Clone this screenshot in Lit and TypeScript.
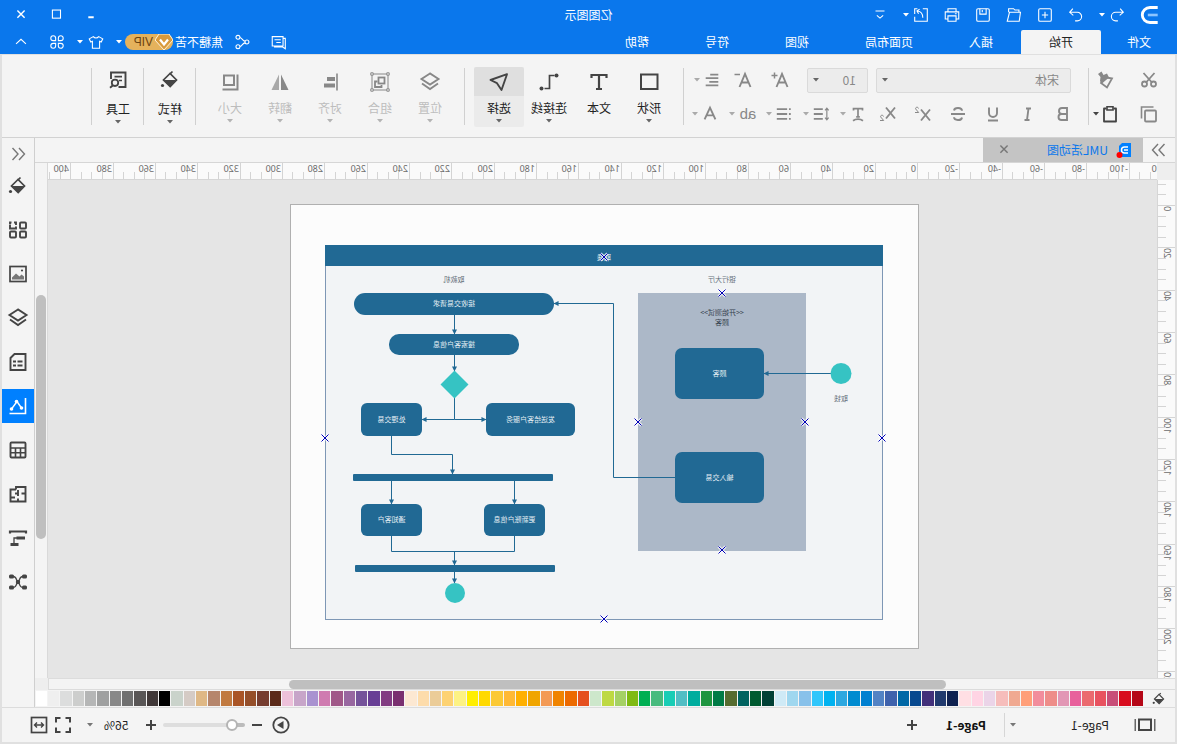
import { LitElement, html, svg, css, nothing } from "lit";
import { customElement, property, state } from "lit/decorators.js";
import { classMap } from "lit/directives/class-map.js";
import { styleMap } from "lit/directives/style-map.js";

/* Every glyph is drawn on a 20 x 20 grid. */
const ICONS: Record<string, unknown> = {
  logo: svg`<path d="M3 3.200h7c4 0 7 3 7 6.800s-3 6.800-7 6.800H3" fill="none" stroke="#fff" stroke-width="2.600"/><path d="M3 10h9" stroke="#8cc4ff" stroke-width="2.400"/>`,
  undo: svg`<path d="M6.5 3 3 7l4 3.4M3.2 7h8.3a4.6 4.6 0 0 1 0 9.5H9"/>`,
  redo: svg`<path d="M13.5 3 17 7l-4 3.4M16.8 7H8.5a4.6 4.6 0 0 0 0 9.5H11"/>`,
  create: svg`<rect x="3" y="3" width="14" height="14" rx="1.5"/><path d="M10 6.5v7M6.500 10h7"/>`,
  open: svg`<path d="M4.500 7V4.500h4.500l1.500-1.500h5.500v4M2.800 7h12.200l2.500 10H4.200z"/>`,
  save: svg`<rect x="3" y="3" width="14" height="14" rx="1.500"/><path d="M6.500 3v6h7V3M10.800 4.500v2.500"/>`,
  print: svg`<path d="M5.500 6.500V3h9v3.500M5 14.500H2.500v-8h15v8H15M5.500 11h9v6h-9zM4.800 8.600h2"/>`,
  exportFile: svg`<path d="M8 3H3v14h14v-5M17 9V3h-3M8 13c0-5 2-7 6-7.500M11.500 3.500l3 2-1.800 3.200"/>`,
  customize: svg`<path d="M5 5.500h10M6.500 10.500l3.500 3 3.500-3"/>`,
  minimize: svg`<path d="M7 12.500h6" stroke-width="2.200"/>`,
  maximize: svg`<rect x="5" y="4.500" width="9" height="9"/>`,
  close: svg`<path d="m6 5 8 8M14 5l-8 8" stroke-width="1.600"/>`,
  message: svg`<path d="M5.500 4h12v10.500h-12zM5.500 6H3v11.500L6 15.500h9.500M8 7.500h7M8 10.500h5"/>`,
  share: svg`<circle cx="4.500" cy="10" r="2.200"/><circle cx="14.500" cy="4.800" r="2.200"/><circle cx="14.500" cy="15.200" r="2.200"/><path d="M6.500 9c3 0 3-3.500 5.800-4M6.500 11c3 0 3 3.500 5.800 4"/>`,
  shirt: svg`<path d="M7 4c1.500 2 4.500 2 6 0l4.500 2.500-1.700 3.500-1.800-.8V17H6V9.200L4.200 10 2.500 6.500z"/>`,
  apps: svg`<path d="M8.500 8.500H5.800a2.700 2.700 0 1 1 2.700-2.700zM11.500 8.500V5.800a2.700 2.700 0 1 1 2.700 2.700zM8.500 11.500v2.700a2.700 2.700 0 1 1-2.700-2.700zM11.500 11.500h2.700a2.700 2.700 0 1 1-2.700 2.700z"/>`,
  collapse: svg`<path d="m4.500 12 5.500-5 5.500 5"/>`,
  cut: svg`<circle cx="5.500" cy="14" r="2.500"/><circle cx="14.500" cy="14" r="2.500"/><path d="M4.500 3 13 12.500M15.500 3 7 12.500" stroke-width="1.800"/>`,
  copy: svg`<rect x="3" y="6.500" width="11" height="11" rx="1"/><path d="M5.500 3h12v11.500" stroke-width="1.600"/>`,
  painter: svg`<path d="m4 8.500 8-1.500 3 6-6 4.500z"/><path d="m7 7.500 2-4 3.500 1.500 2-3.500 3.500 2.500-2.500 3 .5 4-2 2.500z" class="solid"/>`,
  paste: svg`<path d="M6.500 4.500H4v13h12v-13h-2.500" stroke-linejoin="round"/><path d="M7 2.800h6V6H7z" stroke-width="1.600"/>`,
  grow: svg`<path d="m2.500 17 5.500-13 5.500 13M4.500 12.500h7"/><path d="M12.500 5.500h6M15.500 2.500v6" stroke-width="1.500"/>`,
  shrink: svg`<path d="m2.500 17 5.500-13 5.500 13M4.500 12.500h7"/><path d="M13 4.500h5.500" stroke-width="1.500"/>`,
  align: svg`<path d="M3 4h9M3 8h14M3 12h10M3 16h14" stroke-width="2"/>`,
  bold: svg`<path d="M6 4h5a3 3 0 0 1 0 6H6zM6 10h5.500a3 3 0 0 1 0 6H6z"/>`,
  italic: svg`<path d="M7 4.500h5M8.500 16h5M9.500 4.500 11 16"/>`,
  underline: svg`<path d="M6 3.500V9a4 4 0 0 0 8 0V3.500M5 16.500h10"/>`,
  strike: svg`<path d="M14 6.500c-.5-3.300-7.800-3.300-8 .3M6 13.500c.5 3.600 7.800 3.300 8-.2M3 10h14"/>`,
  superscript: svg`<path d="m3 5.500 9 11M12 5.500l-9 11"/><path d="M14.500 4.500c.3-2 3.500-1.500 2.800.5l-3 3.500h3.700" stroke-width="1"/>`,
  subscript: svg`<path d="m3 3.500 9 11M12 3.500l-9 11"/><path d="M14.500 12.500c.3-2 3.500-1.500 2.800.5l-3 3.500h3.700" stroke-width="1"/>`,
  textPath: svg`<path d="M5 6V4h10v2M10 4v9M8 13.200h4M4.500 17.500c3-2.500 8-2.500 11 0"/>`,
  lineSpacing: svg`<path d="M8 4.500h10M8 10h10M8 15.500h10" stroke-width="2"/><path d="M3.500 4v12M1.500 6l2-2.500 2 2.500M1.500 14l2 2.500 2-2.500" stroke-width="1.300"/>`,
  bullets: svg`<path d="M2.500 4.500h2M6.500 4.500H18M2.500 10h2M6.500 10H18M2.500 15.500h2M6.500 15.500H18" stroke-width="2"/>`,
  fontColor: svg`<path d="m4 16 6-13 6 13M6 11.500h8" stroke-width="2.100"/>`,
  square: svg`<rect x="1.500" y="2.500" width="16.500" height="14.500" stroke-width="2"/>`,
  text: svg`<path d="M2.500 6V3h15v3M10 3v14M7 17h6" stroke-width="2.200"/>`,
  connector: svg`<path d="M14.500 16.500H9.500V3.500H4.500" stroke-width="1.700"/><circle cx="2.500" cy="3.500" r="2" class="solid"/><circle cx="17.500" cy="16.500" r="2" class="solid"/>`,
  select: svg`<path d="M2 2.200 18.500 8l-6.500 3.200L7.500 18z" stroke-width="1.900" stroke-linejoin="round"/>`,
  layers: svg`<path d="M10 1.500 18.500 7 10 12.500 1.500 7zM2 11.500l8 5.500 8-5.500" stroke-width="1.900"/>`,
  group: svg`<rect x="2" y="2" width="16" height="16" stroke-width="1"/><rect x="5.500" y="5.500" width="6" height="6" stroke-width="1.800"/><path d="M12.500 9.500h2.500v5.500H8.500v-2" stroke-width="1.800"/><path d="M.8.800h2.400v2.400H.8zM16.800.800h2.400v2.400h-2.400zM.8 16.800h2.400v2.400H.8zM16.800 16.800h2.400v2.400h-2.400z" fill="#f4f4f4" stroke-width="1"/>`,
  alignRight: svg`<path d="M3 1.500v17" stroke-width="1.600"/><path d="M5 5h8v4H5zM5 11.500h11v4H5z" class="solid"/>`,
  flip: svg`<path d="M9 2.500V18H1.500z" class="solid"/><path d="M11 2.500V18h7.500z" class="solid" opacity=".7"/>`,
  size: svg`<rect x="6" y="3.500" width="10" height="9.500" stroke-width="2"/><path d="M2.500 2.500v15h15" stroke-width="2"/>`,
  fill: svg`<path d="m10 3.500 6.500 6.500-6.700 6.500L3.500 10z" stroke-width="1.700"/><path d="M4 10h12.500l-6.700 6.500z" class="solid"/><path d="M10 4 7.500 1.500" stroke-width="1.700"/><circle cx="17.500" cy="15.500" r="1.600" class="solid"/>`,
  tools: svg`<path d="M9.500 17H2.500V2.500h14.500V9" stroke-width="1.900"/><path d="M6 6.700h7.500M6 10.500h3" stroke-width="1.700"/><circle cx="13" cy="12.800" r="3.200" stroke-width="1.800"/><path d="m15 15.300 3 2.500" stroke-width="1.800"/>`,
  dock: svg`<path d="m9 4-5.500 6L9 16M15.500 4 10 10l5.500 6" stroke-width="1.400"/>`,
  grid: svg`<rect x="2" y="2.500" width="6" height="6" rx="1"/><path d="M12 5V2.500h2M18 5v3.500h-6V6.500M16.500 2.500H18v2"/><rect x="2" y="11.500" width="6" height="6" rx="1"/><rect x="12" y="11.500" width="6" height="6" rx="1"/>`,
  image: svg`<rect x="2" y="2.500" width="16" height="15" stroke-width="1.700"/><path d="M4 15.500v-3l2.500-2 2 2 3.500-3 4 4v2z" fill="#777" stroke="none"/><circle cx="6" cy="6.500" r="1.100" class="solid"/>`,
  document: svg`<path d="M2.500 2h11l4 4v12h-15z"/><path d="M5.500 9.500h5M12 9.500h3M5.500 13.500h5M12 13.500h3"/>`,
  chart: svg`<path d="M2.500 2v15.500h16" stroke-width="1.600"/><path d="m6.500 12 4.500-6.500 5.500 7.500" stroke-width="1.400"/><circle cx="6.500" cy="12" r="1.800" class="solid"/><circle cx="11.500" cy="5.500" r="1.800" class="solid"/><circle cx="16.500" cy="13" r="1.800" class="solid"/>`,
  table: svg`<rect x="2.500" y="2.500" width="15" height="15" rx="1"/><path d="M2.500 8h15M2.500 12.700h15M7.500 8v9.500M12.500 8v9.500" stroke-width="1.600"/>`,
  floor: svg`<path d="M12 5.500V3H2.500v14.500h15V5.500H12M2.500 9.500h4M10 6v6M10 9.500h3M13 13.500h4.500M10 14.500v3"/>`,
  gantt: svg`<path d="M2 5.500V3.500h16v2" stroke-width="2.200"/><path d="M9 10h5v6" stroke-width="1.300"/><path d="M3 8.500h8.500v3H3zM9.500 15h8v3h-8z" class="solid"/>`,
  mindmap: svg`<path d="M5 4.500c4.500 0 3 5.500 5 5.500s.5-5.500 5-5.500M5 15.500c4.500 0 3-5.500 5-5.500s.5 5.500 5 5.500" stroke-width="1.300"/><rect x="1" y="2.500" width="5" height="4" rx="1.500" class="solid"/><rect x="14" y="2.500" width="5" height="4" rx="1.500" class="solid"/><rect x="1" y="13.500" width="5" height="4" rx="1.500" class="solid"/><rect x="14" y="13.500" width="5" height="4" rx="1.500" class="solid"/><circle cx="10" cy="10" r="2.200" class="solid"/>`,
  pages: svg`<rect x="4" y="4.500" width="12" height="10.500" stroke-width="2"/><path d="M.2 4v12M19.800 4v12" stroke-width="1.200"/>`,
  add: svg`<path d="M10 5v10M5 10h10" stroke-width="2"/>`,
  remove: svg`<path d="M5 10h10" stroke-width="2"/>`,
  play: svg`<circle cx="10" cy="10" r="7.700" stroke-width="1.800"/><path d="m7.500 6 6.500 4-6.500 4z" class="solid"/>`,
  fullscreen: svg`<path d="M3 7.500V3h4.500M12.500 3H17v4.500M17 12.500V17h-4.500M7.500 17H3v-4.500" stroke-width="2"/>`,
  fitWidth: svg`<rect x="2.500" y="2.500" width="15" height="15" stroke-width="1.700"/><path d="M6 10h8M8 7.500 5.500 10 8 12.500M12 7.500l2.500 2.500-2.500 2.500" stroke-width="1.400"/>`,
};

@customElement("ui-icon")
class UiIcon extends LitElement {
  @property() name = "";
  static styles = css`
    :host { display: inline-flex; flex: none; width: 20px; height: 20px; }
    svg { width: 100%; height: 100%; overflow: visible; fill: none; stroke: currentColor; stroke-width: var(--stroke, 1.5); }
    .solid { fill: currentColor; stroke: none; }
  `;
  render() {
    return html`<svg viewBox="0 0 20 20" aria-hidden="true">${ICONS[this.name]}</svg>`;
  }
}

@customElement("ui-caret")
class UiCaret extends LitElement {
  static styles = css`
    :host { display: inline-flex; flex: none; width: 8px; height: 4px; justify-content: center; }
    svg { width: 6px; height: 4px; fill: currentColor; }
  `;
  render() {
    return html`<svg viewBox="0 0 6 4" aria-hidden="true"><path d="M0 0h6L3 3.500z" /></svg>`;
  }
}

/* Pixels per millimetre at the current zoom, and the page origin in the canvas. */
const SCALE = 2.117;
const PAGE_LEFT = 239;
const PAGE_TOP = 25;

@customElement("ui-ruler")
class UiRuler extends LitElement {
  @property({ type: Boolean }) vertical = false;
  static styles = css`
    :host { display: block; overflow: hidden; background: #fafafa; }
    svg { display: block; width: 100%; height: 100%; }
    line { stroke: #d4d4d4; shape-rendering: crispEdges; }
    text { font: 9px "Noto Sans", "Noto Sans CJK SC", sans-serif; fill: #6c6c6c; }
  `;
  render() {
    const origin = this.vertical ? PAGE_TOP : PAGE_LEFT;
    const first = this.vertical ? -10 : -120;
    const last = this.vertical ? 220 : 415;
    const marks = [];
    for (let v = first; v <= last; v += 5) {
      const at = Math.round(origin + v * SCALE);
      const major = v % 20 === 0;
      const from = major ? 0 : 9;
      marks.push(
        this.vertical
          ? svg`<line x1=${from} x2="17" y1=${at + 0.5} y2=${at + 0.5}/>`
          : svg`<line y1=${from} y2="17" x1=${at + 0.5} x2=${at + 0.5}/>`
      );
      if (major) {
        marks.push(
          this.vertical
            ? svg`<text text-anchor="end" transform="translate(11 ${at + 1}) rotate(-90)">${v}</text>`
            : svg`<text x=${at + 2} y="9">${v}</text>`
        );
      }
    }
    return html`<svg aria-hidden="true">${marks}</svg>`;
  }
}

type Shape = { x: number; y: number; w: number; h: number; r: number; label?: string };

const SHAPES: Shape[] = [
  { x: 154, y: 143, w: 89, h: 51, r: 7, label: "顾客" },
  { x: 154, y: 247, w: 89, h: 51, r: 7, label: "输入交易" },
  { x: 364, y: 88, w: 200, h: 22, r: 11, label: "接收交易请求" },
  { x: 399, y: 129, w: 130, h: 21, r: 10, label: "搜索客户信息" },
  { x: 343, y: 198, w: 89, h: 33, r: 6, label: "发送给客户服务" },
  { x: 496, y: 198, w: 61, h: 33, r: 6, label: "处理交易" },
  { x: 365, y: 269, w: 200, h: 7, r: 1 },
  { x: 373, y: 299, w: 61, h: 32, r: 6, label: "更新账户信息" },
  { x: 496, y: 299, w: 61, h: 32, r: 6, label: "通知客户" },
  { x: 363, y: 360, w: 200, h: 7, r: 1 },
];

const WIRES = [
  "M87 168.500H154",
  "M243 272.500H304.500V98.500H364",
  "M463.500 110V129",
  "M463.500 150V166",
  "M463.500 193V214.500H496",
  "M463.500 214.500H432",
  "M526.500 231V249.500H465.500V269",
  "M526.500 276V299",
  "M403.500 276V299",
  "M463.500 346.500V360",
  "M463.500 367V378",
];

const HANDLES = [
  [314, 52], [196, 88], [280, 217], [113, 217],
  [196, 345], [36, 233], [593, 233], [314, 414],
];

@customElement("diagram-page")
class DiagramPage extends LitElement {
  static styles = css`
    :host { display: block; width: 629px; height: 445px; border: 1px solid #b0b0b0; background: #fcfcfc; }
    svg { display: block; width: 100%; height: 100%; }
    text { font: 7px "Noto Sans CJK SC", "Liberation Sans", sans-serif; text-anchor: middle; fill: #e3edf3; }
    .note { fill: #68737d; }
    .strong { fill: #36424f; }
    .frame { fill: #f2f4f6; stroke: #7e97b5; }
    .fill { fill: #216994; }
    .lane { fill: #acb8c8; }
    .end { fill: #36c3c3; }
    .wire { fill: none; stroke: #216994; }
    .halo { stroke: #fff; stroke-width: 3; opacity: 0.7; }
    .cross { stroke: #0000b8; }
  `;
  render() {
    return html`<svg viewBox="0 0 627 443" role="img" aria-label="UML活动图">
      <defs>
        <marker id="tip" viewBox="0 0 6 6" refX="5.500" refY="3" markerWidth="5" markerHeight="5" orient="auto">
          <path d="M0 0 6 3 0 6z" fill="#216994" />
        </marker>
      </defs>
      <rect class="frame" x="35.500" y="40.500" width="557" height="374" />
      <rect class="fill" x="35" y="40" width="558" height="21" />
      <text x="314" y="55">取钱</text>
      <text class="note" x="196" y="77">银行大厅</text>
      <text class="note" x="464" y="77">取款机</text>
      <rect class="lane" x="112" y="88" width="168" height="258" />
      <text class="strong" x="196" y="110">&lt;&lt;开始测试&gt;&gt;</text>
      <text class="strong" x="196" y="120">顾客</text>
      <text class="note" x="77" y="196">取钱</text>
      <path class="wire" d="M526.500 331V346.500H403.500V331" />
      ${WIRES.map((d) => svg`<path class="wire" d=${d} marker-end="url(#tip)"/>`)}
      <circle class="end" cx="77" cy="168.500" r="10.500" />
      <path class="end" d="M463.500 165.500l14 14-14 14-14-14z" />
      <circle class="end" cx="463" cy="388" r="10" />
      ${SHAPES.map(
        (s) => svg`<rect class="fill" x=${s.x} y=${s.y} width=${s.w} height=${s.h} rx=${s.r}/>
          ${s.label ? svg`<text x=${s.x + s.w / 2} y=${s.y + Math.round(s.h / 2) + 2}>${s.label}</text>` : nothing}`
      )}
      ${HANDLES.map(([x, y]) => {
        const d = `M${x - 3.5} ${y - 3.5}l7 7M${x + 3.5} ${y - 3.5}l-7 7`;
        return svg`<path class="halo" d=${d}/><path class="cross" d=${d}/>`;
      })}
    </svg>`;
  }
}

const PALETTE = (
  "b50717 d80c1e c84e78 e8525f eb6a6f e8609c e297b5 ee8d89 f28d9c ff9f79 f0a991 f6bdbb ebd4e8 ffd4e4 ffdfe4 " +
  "0f2150 213a6e 42307a 08498f 0068a6 3f62ac 5383c4 0080d0 008bd0 2da8e0 00b2f0 30c6fb 88c1ea 9fd7ef cfeaf6 " +
  "004035 005a30 006360 566c30 007b46 1f9540 00ad9e 52bec4 19cdb5 48bb7e 00af53 7fba13 a5d165 bed943 cde7cb " +
  "e55020 ec6a00 f08400 f39a55 f0a500 ffb000 ffb935 fbc935 ffd900 ffee00 fdf284 fdd272 ebcc98 fddcab fce8d2 " +
  "7a3070 823c82 683f95 75539a 9867a0 a05888 cf7bb0 a992d0 c7a5c9 edc1da 5b2a1a 763d30 954f2a aa5526 c17a40 " +
  "b6866c dfb885 d5cbc5 cad3cb 000000 403838 595656 707070 888888 9fa0a0 b5b6b6 cdcecd dcdddd efefef ffffff"
).split(" ");

const MENUS = ["文件", "开始", "插入", "页面布局", "视图", "符号", "帮助"];

const DRAW_TOOLS = [
  { icon: "square", label: "形状", caret: true },
  { icon: "text", label: "文本", caret: false },
  { icon: "connector", label: "连接线", caret: true },
  { icon: "select", label: "选择", caret: true, active: true },
];
const ARRANGE_TOOLS = [
  { icon: "layers", label: "位置" },
  { icon: "group", label: "组合" },
  { icon: "alignRight", label: "对齐" },
  { icon: "flip", label: "翻转" },
  { icon: "size", label: "大小" },
].map((t) => ({ ...t, caret: true, disabled: true }));

const PANELS = [
  ["fill", "填充"], ["grid", "符号库"], ["image", "图片"], ["layers", "图层"], ["document", "注释"],
  ["chart", "图表"], ["table", "表格"], ["floor", "平面图"], ["gantt", "甘特图"], ["mindmap", "思维导图"],
];

type Tool = { icon: string; label: string; caret?: boolean; active?: boolean; disabled?: boolean; tall?: boolean };

@customElement("app-root")
class AppRoot extends LitElement {
  @state() private menu = "开始";
  @state() private panel = "chart";

  static styles = css`
    :host { display: block; }
    * { box-sizing: border-box; }
    /* The interface is laid out left to right and flipped as a whole. */
    .app {
      display: flex; flex-direction: column; height: 100vh; overflow: hidden; transform: scaleX(-1);
      background: #f4f4f4; color: #222;
      font: 12px/18px "Noto Sans CJK SC", "Liberation Sans", sans-serif;
    }
    button, select {
      border: 0; padding: 0; margin: 0; background: none; color: inherit; font: inherit; appearance: none;
    }
    button { display: inline-flex; align-items: center; justify-content: center; white-space: nowrap; }
    .top { background: #0a77ec; color: #fff; --stroke: 1.2; flex: none; }
    .top ui-icon { width: 18px; height: 18px; }
    .title { display: grid; grid-template-columns: 1fr auto 1fr; align-items: center; height: 30px; }
    .quick { display: flex; align-items: center; gap: 13px; padding-left: 16px; }
    .quick .brand { width: 22px; height: 22px; }
    .pair { gap: 2px; }
    .window { display: flex; justify-content: flex-end; gap: 17px; padding-right: 12px; }
    .menu { display: flex; align-items: stretch; height: 24px; }
    .menu .item { padding: 0 28px; }
    .menu .item:first-child { padding: 0 26px; }
    .menu .current { background: #f4f4f4; color: #222; border-radius: 2px 2px 0 0; }
    .account { display: flex; align-items: center; gap: 10px; margin-left: auto; padding-right: 12px; }
    .account .pair { gap: 3px; }
    .gap-after { margin-right: 9px; }
    .gap-before { margin-left: 8px; }
    .user { gap: 2px; }
    .vip {
      display: inline-flex; align-items: center; height: 16px; border-radius: 8px; background: #e5b25c; color: #6b4310;
    }
    .vip svg { width: 18px; height: 16px; }
    .vip span { width: 30px; padding-left: 2px; font: 12px/16px "Liberation Sans", sans-serif; text-align: left; }

    .body { flex: 1; min-height: 0; display: flex; flex-direction: column; border: 2px solid #e0e0e0; border-top-width: 1px; }
    .ribbon { display: flex; flex: none; height: 83px; padding-top: 8px; border-bottom: 1px solid #d2d2d2; color: #888; }
    .sep { flex: none; width: 1px; height: 57px; margin-top: 5px; background: #d0d0d0; }
    .clip { display: grid; grid-template-columns: 52px 34px; grid-auto-rows: 34px; --stroke: 1.8; }
    .clip .dark { color: #444; }
    .font { width: 404px; --stroke: 1.9; }
    .row { display: flex; align-items: center; height: 34px; }
    .first { padding-left: 17px; }
    .second { padding-left: 7px; }
    .combo { position: relative; display: block; margin-right: 8px; color: #888; }
    .combo select {
      display: block; width: 100%; height: 25px; padding: 0 11px; border: 1px solid #dadada; border-radius: 2px; background: #ececec;
    }
    .combo ui-caret { position: absolute; right: 5px; top: 10px; color: #666; }
    .family { width: 195px; }
    .points { width: 61px; }
    .mark { width: 35px; }
    .step { width: 37px; }
    .drop { width: 37px; justify-content: flex-start; gap: 2px; }
    .drop ui-icon { width: 18px; height: 18px; margin-left: 2px; }
    .drop ui-caret { color: #aaa; }
    .spacer { width: 2px; }
    .ab { width: 20px; font: 15px/18px "Liberation Sans", sans-serif; }
    .tools { display: flex; padding: 4px 9px 0; }
    .single { padding: 4px 1px 0 0; }
    .tool { width: 50px; height: 60px; flex-direction: column; justify-content: flex-start; color: #222; border-radius: 2px; overflow: hidden; }
    .tool .pic { display: flex; width: 50px; height: 29px; align-items: center; justify-content: center; color: #444; }
    .tool .name { margin-top: 3px; }
    .tool ui-caret { margin-top: 2px; color: #666; }
    .tall .pic { height: 26px; }
    .tall .name { margin-top: 7px; }
    .tall ui-caret { margin-top: 2px; }
    .tool.active { background: #ebebeb; }
    .tool.active .pic { background: #dfdfdf; }
    .tool.disabled { color: #bdbdbd; }
    .tool.disabled .pic { color: #888; }
    .tool.disabled ui-caret { color: #b4b4b4; }

    .main { flex: 1; min-height: 0; display: flex; }
    .work { flex: 1; min-width: 0; display: flex; flex-direction: column; }
    .tabs { display: flex; flex: none; height: 25px; border-bottom: 1px solid #d6d6d6; color: #777; }
    .tabs > button { width: 32px; }
    .doc { display: flex; align-items: center; width: 160px; padding: 0 12px; background: #c4c4c4; color: #0a77ec; }
    .doc svg { width: 14px; height: 16px; overflow: visible; }
    .doc .label { flex: 1; padding-left: 9px; }
    .doc button { color: #777; }
    .doc ui-icon { width: 18px; height: 18px; }

    .stage { flex: 1; min-height: 0; display: grid; grid-template: 17px 1fr 12px / 18px 1fr 13px; }
    .corner { background: #eee; }
    .hr { border-bottom: 1px solid #d6d6d6; }
    .vr { border-right: 1px solid #d6d6d6; }
    .canvas { overflow: hidden; padding: 24px 0 0 238px; background: #e5e5e5; }
    .vbar { grid-column: 3; grid-row: 1 / 3; padding: 0 1px; border-left: 1px solid #d9d9d9; }
    .hbar { grid-column: 1 / 3; padding: 1px 0; border: solid #dcdcdc; border-width: 1px 1px 1px 0; }
    .thumb { border-radius: 5px; background: #bfbfbf; }
    .vbar .thumb { position: relative; }
    .hbar .thumb { position: relative; height: 9px; }

    .palette { display: flex; flex: none; height: 17px; padding: 1px 1px 1px 0; color: #444; }
    .palette .bucket { width: 32px; }
    .palette ui-icon { width: 14px; height: 14px; }
    .colors { flex: 1; display: flex; gap: 1px; }
    .colors button { flex: 1; min-width: 0; }

    .panels { flex: none; width: 33px; display: flex; flex-direction: column; border-left: 1px solid #cfcfcf; color: #444; --stroke: 1.9; }
    .panels button { height: 34px; margin-bottom: 10px; }
    .panels .fold { height: 31px; margin: 0; color: #777; }
    .panels .on { background: #0080ff; color: #fff; }
    .flip { transform: scaleX(-1); }

    .status { display: flex; align-items: center; flex: none; height: 35px; border-top: 1px solid #dcdcdc; color: #444; }
    .status button { height: 24px; }
    .pagemode { width: 60px; }
    .pagepick { position: relative; width: 110px; color: #222; }
    .pagepick select { width: 100%; height: 24px; padding-left: 6px; }
    .pagepick ui-caret { position: absolute; right: 4px; top: 10px; color: #777; }
    .line { width: 1px; height: 24px; background: #d6d6d6; }
    .status .page { width: 76px; font-weight: bold; color: #111; }
    .status .plus { width: 32px; }
    .zoom { display: flex; align-items: center; margin-left: auto; padding-right: 27px; gap: 2px; }
    .zoom .spaced { margin-right: 2px; }
    .zoom input {
      width: 82px; height: 12px; margin: 0; appearance: none; background: none;
    }
    .zoom input::-webkit-slider-runnable-track {
      height: 4px; border-radius: 2px; background: linear-gradient(to right, #bbb 17%, #dedede 17%);
    }
    .zoom input::-webkit-slider-thumb {
      appearance: none; width: 12px; height: 12px; margin-top: -4px; border: 2px solid #b4b4b4; border-radius: 50%; background: #fff;
    }
    .percent { gap: 10px; margin: 0 11px; color: #222; }
    .percent ui-caret { color: #777; }
  `;

  private icon(name: string, label: string, cls = "") {
    return html`<button class=${cls} aria-label=${label}><ui-icon name=${name}></ui-icon></button>`;
  }

  private drop(name: string, label: string, cls: string) {
    return html`<button class=${cls} aria-label=${label}><ui-icon name=${name}></ui-icon><ui-caret></ui-caret></button>`;
  }

  private tool(t: Tool) {
    return html`<button
      class=${classMap({ tool: true, active: !!t.active, disabled: !!t.disabled, tall: !!t.tall })}
      ?disabled=${t.disabled}
    >
      <span class="pic"><ui-icon name=${t.icon}></ui-icon></span>
      <span class="name">${t.label}</span>
      ${t.caret ? html`<ui-caret></ui-caret>` : nothing}
    </button>`;
  }

  private renderTop() {
    return html`<header class="top">
      <div class="title">
        <div class="quick">
          <ui-icon class="brand" name="logo"></ui-icon>
          ${this.drop("undo", "撤销", "pair")} ${this.icon("redo", "重做")} ${this.icon("create", "新建")}
          ${this.icon("open", "打开")} ${this.icon("save", "保存")} ${this.icon("print", "打印")}
          ${this.drop("exportFile", "导出", "pair")} ${this.icon("customize", "自定义")}
        </div>
        <span>亿图图示</span>
        <div class="window">
          ${this.icon("minimize", "最小化")} ${this.icon("maximize", "最大化")} ${this.icon("close", "关闭")}
        </div>
      </div>
      <nav class="menu">
        ${MENUS.map(
          (m) => html`<button class=${classMap({ item: true, current: m === this.menu })} @click=${() => (this.menu = m)}>${m}</button>`
        )}
        <div class="account">
          ${this.icon("message", "消息", "gap-after")} ${this.icon("share", "分享")}
          <button class="user">
            <span>焦糖不苦</span>
            <span class="vip">
              <svg viewBox="0 0 18 16" aria-hidden="true">
                <path d="M4 0h10l4 6-9 10L0 6z" fill="#d99a3c" stroke="#fff3da" />
                <path d="m5 5.500 4 5 4-5" fill="none" stroke="#fff" stroke-width="2.200" />
              </svg>
              <span>VIP</span>
            </span>
            <ui-caret></ui-caret>
          </button>
          ${this.drop("shirt", "主题", "pair")} ${this.icon("apps", "应用")} ${this.icon("collapse", "收起", "gap-before")}
        </div>
      </nav>
    </header>`;
  }

  private renderRibbon() {
    return html`<section class="ribbon" aria-label="开始">
      <div class="clip">
        ${this.icon("cut", "剪切")} ${this.icon("painter", "格式刷")} ${this.icon("copy", "复制")}
        ${this.drop("paste", "粘贴", "dark")}
      </div>
      <div class="sep"></div>
      <div class="font">
        <div class="row first">
          <label class="combo family"><select aria-label="字体"><option>宋体</option></select><ui-caret></ui-caret></label>
          <label class="combo points"><select aria-label="字号"><option>10</option></select><ui-caret></ui-caret></label>
          ${this.icon("grow", "增大字号", "step")} ${this.icon("shrink", "减小字号", "step")}
          <span class="spacer"></span>${this.drop("align", "对齐方式", "drop")}
        </div>
        <div class="row second">
          ${this.icon("bold", "加粗", "mark")} ${this.icon("italic", "斜体", "mark")} ${this.icon("underline", "下划线", "mark")}
          ${this.icon("strike", "删除线", "mark")} ${this.icon("superscript", "上标", "mark")} ${this.icon("subscript", "下标", "mark")}
          <span class="spacer"></span>
          ${this.drop("textPath", "文字方向", "drop")} ${this.drop("lineSpacing", "行距", "drop")} ${this.drop("bullets", "项目符号", "drop")}
          <button class="drop" aria-label="突出显示"><span class="ab">ab</span><ui-caret></ui-caret></button>
          ${this.drop("fontColor", "字体颜色", "drop")}
        </div>
      </div>
      <div class="sep"></div>
      <div class="tools">${DRAW_TOOLS.map((t) => this.tool(t))}</div>
      <div class="sep"></div>
      <div class="tools">${ARRANGE_TOOLS.map((t) => this.tool(t))}</div>
      <div class="sep"></div>
      <div class="tools single">${this.tool({ icon: "fill", label: "样式", caret: true, tall: true })}</div>
      <div class="sep"></div>
      <div class="tools single">${this.tool({ icon: "tools", label: "工具", caret: true, tall: true })}</div>
      <div class="sep"></div>
    </section>`;
  }

  private renderWork() {
    return html`<div class="work">
      <div class="tabs">
        ${this.icon("dock", "收起符号库", "flip")}
        <div class="doc">
          <svg viewBox="0 0 14 16" aria-hidden="true">
            <path d="M0 1h9l3 3v11H0z" fill="#0080ff" />
            <path d="M3 5h3.500a3 3 0 0 1 0 6H3M3 8h4" fill="none" stroke="#fff" stroke-width="1.500" />
            <circle cx="11.500" cy="13" r="3" fill="#f00" />
          </svg>
          <span class="label">UML活动图</span>
          ${this.icon("close", "关闭标签")}
        </div>
      </div>
      <div class="stage">
        <div class="corner"></div>
        <ui-ruler class="hr"></ui-ruler>
        <div class="vbar"><div class="thumb" style=${styleMap({ top: "25.7%", height: "47.3%" })}></div></div>
        <ui-ruler class="vr" vertical></ui-ruler>
        <div class="canvas"><diagram-page></diagram-page></div>
        <div class="hbar"><div class="thumb" style=${styleMap({ left: "20.3%", width: "58.4%" })}></div></div>
        <div class="corner"></div>
      </div>
      <div class="palette">
        ${this.icon("fill", "填充颜色", "bucket")}
        <div class="colors">
          ${PALETTE.map((c) => html`<button aria-label="#${c}" style=${styleMap({ background: "#" + c })}></button>`)}
        </div>
      </div>
    </div>`;
  }

  private renderPanels() {
    return html`<aside class="panels">
      ${this.icon("dock", "展开面板", "fold")}
      ${PANELS.map(
        ([name, label]) => html`<button class=${classMap({ on: this.panel === name })} aria-label=${label} @click=${() => (this.panel = name)}>
          <ui-icon name=${name}></ui-icon>
        </button>`
      )}
    </aside>`;
  }

  private renderStatus() {
    return html`<footer class="status">
      ${this.icon("pages", "页面列表", "pagemode")}
      <label class="pagepick"><select aria-label="当前页"><option>Page-1</option></select><ui-caret></ui-caret></label>
      <span class="line"></span>
      <button class="page">Page-1</button>
      ${this.icon("add", "新增页", "plus")}
      <div class="zoom">
        ${this.icon("play", "播放", "spaced")} ${this.icon("remove", "缩小")}
        <input type="range" min="0" max="100" value="11" aria-label="缩放" />
        ${this.icon("add", "放大")}
        <button class="percent">56%<ui-caret></ui-caret></button>
        ${this.icon("fullscreen", "全屏", "spaced")} ${this.icon("fitWidth", "适合宽度")}
      </div>
    </footer>`;
  }

  render() {
    return html`<div class="app">
      ${this.renderTop()}
      <div class="body">
        ${this.renderRibbon()}
        <div class="main">${this.renderWork()}${this.renderPanels()}</div>
        ${this.renderStatus()}
      </div>
    </div>`;
  }
}
